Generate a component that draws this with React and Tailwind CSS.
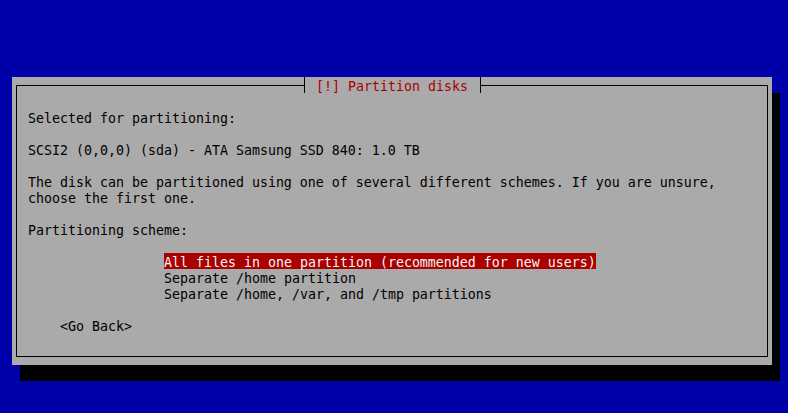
export default function App() {
  const font = { fontFamily: '"DejaVu Sans Mono", "Liberation Mono", monospace' };
  const Row = ({ children, className = "" }) => (
    <div className={"h-4 leading-[19px] whitespace-pre " + className}>{children}</div>
  );
  return (
    <div
      className="w-[788px] h-[413px] bg-[#0000a8] pt-[77px] pl-[12px] overflow-hidden text-[13.29px] text-black"
      style={font}
    >
      <div className="w-[760px] h-[288px] bg-[#aaaaaa] shadow-[8px_16px_0_0_#000] pl-[4px] pt-[8px]">
        <div className="relative w-[752px] h-[272px] border border-black pl-[11px] pt-[23px]">
          <div className="absolute left-[287px] top-[-9px] h-4 w-[177px] bg-[#aaaaaa] border-l border-r border-black pl-[11px] leading-[19px] whitespace-pre text-[#aa0000]">
            [!] Partition disks
          </div>
          <Row>Selected for partitioning:</Row>
          <Row />
          <Row>SCSI2 (0,0,0) (sda) - ATA Samsung SSD 840: 1.0 TB</Row>
          <Row />
          <Row>The disk can be partitioned using one of several different schemes. If you are unsure,</Row>
          <Row>choose the first one.</Row>
          <Row />
          <Row>Partitioning scheme:</Row>
          <Row />
          <div className="pl-[136px]">
            <Row className="w-fit bg-[#aa0000] text-[#f4f4f4]">All files in one partition (recommended for new users)</Row>
            <Row>Separate /home partition</Row>
            <Row>Separate /home, /var, and /tmp partitions</Row>
          </div>
          <Row />
          <Row className="pl-[32px]">&lt;Go Back&gt;</Row>
        </div>
      </div>
    </div>
  );
}
